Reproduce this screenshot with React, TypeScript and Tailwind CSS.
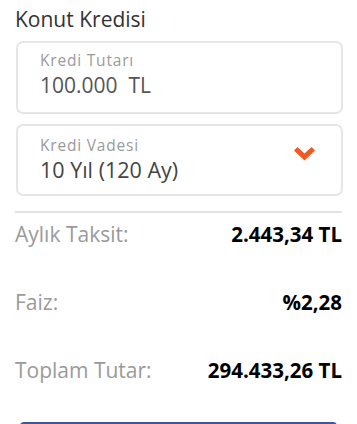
const rows = [
  { label: 'Aylık Taksit:', value: '2.443,34 TL' },
  { label: 'Faiz:', value: '%2,28' },
  { label: 'Toplam Tutar:', value: '294.433,26 TL' },
];

export default function App() {
  return (
    <div className="h-[424px] overflow-hidden bg-white px-[15px] font-['Open_Sans',sans-serif]">
      <h1 className="pt-[4px] text-[21px] leading-[30px] text-[#333]">Konut Kredisi</h1>

      {/* amount */}
      <div className="mt-[7px] ml-px mr-[-1px] h-[73px] rounded-[7px] border-2 border-[#e6e6e6] pl-[22px] pt-[7px]">
        <p className="text-[15.5px] leading-[20px] tracking-[0.8px] text-[#9a9a9a]">Kredi Tutarı</p>
        <p className="mt-[1px] text-[21px] leading-[28px] text-[#555]">100.000&nbsp; TL</p>
      </div>

      {/* term */}
      <div className="mt-[10px] ml-px mr-[-1px] flex h-[72px] items-center rounded-[7px] border-2 border-[#e6e6e6] pl-[22px] pr-[26px]">
        <div className="flex-1 -mt-[2px]">
          <p className="text-[15.5px] leading-[20px] tracking-[0.8px] text-[#9a9a9a]">Kredi Vadesi</p>
          <p className="mt-[1px] text-[21.5px] leading-[28px] text-[#444]">10 Yıl (120 Ay)</p>
        </div>
        <svg width="21" height="14" viewBox="0 0 21 14" className="-mt-[12px]">
          <path d="M0 3.5 L3.5 0 L10.5 6.5 L17.5 0 L21 3.5 L10.5 13.5 Z" fill="#ee5a24" />
        </svg>
      </div>

      <div className="mt-[15px] h-[2px] bg-[#e2e2e2]" />

      <div className="mt-[4px]">
        {rows.map(r => (
          <div key={r.label} className="flex h-[68px] items-start justify-between">
            <span className="pt-[3px] text-[21px] leading-[28px] text-[#9a9a9a]">{r.label}</span>
            <span className="pt-[3px] text-[20.5px] font-bold leading-[28px] text-black">{r.value}</span>
          </div>
        ))}
      </div>

      <div className="mx-[5px] mt-[1px] h-[10px] rounded-t-[4px] bg-[#3b5998]" />
    </div>
  );
}
